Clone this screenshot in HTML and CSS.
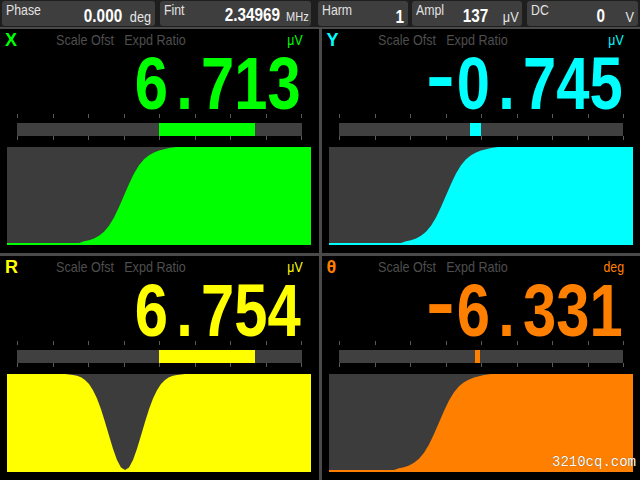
FILE: index.html
```html
<!DOCTYPE html>
<html>
<head>
    <title>Lock-in Amplifier</title>
    <link rel="stylesheet" href="styles.css">
</head>
<body>
<div class="screen">
    <div class="topbar">
        <div class="field field-phase">
            <span class="field-label">Phase</span>
            <span class="field-value">0.000<span class="unit unit-deg">deg</span></span>
        </div>
        <div class="field field-fint">
            <span class="field-label">Fint</span>
            <span class="field-value">2.34969<span class="unit unit-mhz">MHz</span></span>
        </div>
        <div class="field field-harm">
            <span class="field-label">Harm</span>
            <span class="field-value">1</span>
        </div>
        <div class="field field-ampl">
            <span class="field-label">Ampl</span>
            <span class="field-value">137<span class="unit unit-uv">μV</span></span>
        </div>
        <div class="field field-dc">
            <span class="field-label">DC</span>
            <span class="field-value">0<span class="unit unit-v">V</span></span>
        </div>
    </div>

    <div class="panels">
        <!-- X -->
        <div class="panel ch-x">
            <div class="panel-head">
                <span class="ch">X</span>
                <span class="menu">Scale Ofst<span class="menu-gap">Expd Ratio</span></span>
                <span class="ch-unit">μV</span>
            </div>
            <div class="reading">6<span class="dot">.</span>713</div>
            <div class="meter">
                <div class="ticks"></div>
                <div class="track"><div class="fill" style="left:49.8%;width:33.7%"></div></div>
                <div class="ticks"></div>
            </div>
            <svg class="chart" viewBox="0 0 304 98" preserveAspectRatio="none">
                <rect width="304" height="98" fill="#3c3c3c"/>
                <path transform="translate(117,0)" fill="currentColor" d="M-200,96 H-45 L-40,94.3 L-35,93.2 L-30,91.5 L-25,88.8 L-20,84.7 L-15,78.7 L-10,70.4 L-5,60.1 L0,48.5 L5,36.9 L10,26.6 L15,18.3 L20,12.3 L25,8.2 L30,5.5 L35,3.6 L40,2.2 L45,1 L52,0 H300 V98 H-200 Z"/>
            </svg>
        </div>

        <!-- Y -->
        <div class="panel ch-y">
            <div class="panel-head">
                <span class="ch">Y</span>
                <span class="menu">Scale Ofst<span class="menu-gap">Expd Ratio</span></span>
                <span class="ch-unit">μV</span>
            </div>
            <div class="reading"><span class="minus">-</span>0<span class="dot">.</span>745</div>
            <div class="meter">
                <div class="ticks"></div>
                <div class="track"><div class="fill" style="left:46.1%;width:3.9%"></div></div>
                <div class="ticks"></div>
            </div>
            <svg class="chart" viewBox="0 0 304 98" preserveAspectRatio="none">
                <rect width="304" height="98" fill="#3c3c3c"/>
                <path transform="translate(117,0)" fill="currentColor" d="M-200,96 H-45 L-40,94.3 L-35,93.2 L-30,91.5 L-25,88.8 L-20,84.7 L-15,78.7 L-10,70.4 L-5,60.1 L0,48.5 L5,36.9 L10,26.6 L15,18.3 L20,12.3 L25,8.2 L30,5.5 L35,3.6 L40,2.2 L45,1 L52,0 H300 V98 H-200 Z"/>
            </svg>
        </div>

        <!-- R -->
        <div class="panel ch-r">
            <div class="panel-head">
                <span class="ch">R</span>
                <span class="menu">Scale Ofst<span class="menu-gap">Expd Ratio</span></span>
                <span class="ch-unit">μV</span>
            </div>
            <div class="reading">6<span class="dot">.</span>754</div>
            <div class="meter">
                <div class="ticks"></div>
                <div class="track"><div class="fill" style="left:49.8%;width:33.7%"></div></div>
                <div class="ticks"></div>
            </div>
            <svg class="chart" viewBox="0 0 304 98" preserveAspectRatio="none">
                <rect width="304" height="98" fill="currentColor"/>
                <path transform="translate(118,0)" fill="#3c3c3c" d="M-60,0 L-52,0.9 L-48,1.8 L-44,3.3 L-40,6 L-36,10.1 L-32,16.2 L-28,24.6 L-24,35.3 L-20,47.9 L-16,61.6 L-12,74.8 L-8,85.9 L-4,93.4 L0,96 L4,93.4 L8,85.9 L12,74.8 L16,61.6 L20,47.9 L24,35.3 L28,24.6 L32,16.2 L36,10.1 L40,6 L44,3.3 L48,1.8 L52,0.9 L60,0 Z"/>
            </svg>
        </div>

        <!-- Theta -->
        <div class="panel ch-t">
            <div class="panel-head">
                <span class="ch">θ</span>
                <span class="menu">Scale Ofst<span class="menu-gap">Expd Ratio</span></span>
                <span class="ch-unit">deg</span>
            </div>
            <div class="reading"><span class="minus">-</span>6<span class="dot">.</span>331</div>
            <div class="meter">
                <div class="ticks"></div>
                <div class="track"><div class="fill" style="left:48.1%;width:1.6%"></div></div>
                <div class="ticks"></div>
            </div>
            <svg class="chart" viewBox="0 0 304 98" preserveAspectRatio="none">
                <rect width="304" height="98" fill="#3c3c3c"/>
                <path transform="translate(110,0)" fill="currentColor" d="M-200,96 H-45 L-40,94.3 L-35,93.2 L-30,91.5 L-25,88.8 L-20,84.7 L-15,78.7 L-10,70.4 L-5,60.1 L0,48.5 L5,36.9 L10,26.6 L15,18.3 L20,12.3 L25,8.2 L30,5.5 L35,3.6 L40,2.2 L45,1 L52,0 H300 V98 H-200 Z"/>
            </svg>
        </div>
    </div>

    <div class="watermark">3210cq.com</div>
</div>
</body>
</html>
```

FILE: styles.css
```css
body {
    margin: 0;
    background: #000;
    font-family: "Liberation Sans", Arial, sans-serif;
}
.screen {
    position: relative;
    width: 640px;
    height: 480px;
    display: flex;
    flex-direction: column;
    overflow: hidden;
}

/* top status fields */
.topbar {
    display: flex;
    gap: 5px;
    padding: 1px 2px;
    height: 27px;
    box-sizing: border-box;
    background: #1e1e1e;
}
.field {
    display: flex;
    background: #3e3e3e;
    border-radius: 3px;
    padding: 0 4px;
    height: 25px;
    white-space: nowrap;
}
.field-phase { width: 155px; }
.field-fint { width: 153px; }
.field-harm { width: 88px; margin-left: 2px; }
.field-ampl { width: 109px; margin-left: -1px; }
.field-dc { width: 110px; }
.field-label {
    flex: none;
    width: 0;
    display: inline-block;
    color: #e2e2e2;
    font-size: 15px;
    line-height: 15px;
    margin-top: 1px;
    transform: scaleX(0.82);
    transform-origin: left top;
}
.field-value {
    display: inline-block;
    margin-left: auto;
    align-self: flex-end;
    color: #fff;
    font-weight: bold;
    font-size: 18px;
    line-height: 18px;
    transform: scaleX(0.85);
    transform-origin: right bottom;
}
.unit {
    font-weight: normal;
    color: #e6e6e6;
    font-size: 15px;
}
.unit-deg { margin-left: 9px; }
.unit-mhz { margin-left: 7px; font-size: 13px; }
.unit-uv { margin-left: 17px; }
.unit-v { margin-left: 24px; }
.field-fint .field-value { margin-right: -2px; }
.field-ampl .field-value { margin-right: -1px; }

/* channel panels */
.panels {
    flex: 1;
    display: grid;
    grid-template-columns: 1fr 1fr;
    grid-template-rows: 1fr 1fr;
    gap: 3px;
    padding-top: 2px;
    background: #4a4a4a;
}
.panel {
    background: #000;
    display: flex;
    flex-direction: column;
    overflow: hidden;
}
.ch-x { color: #00ff00; }
.ch-y { color: #00ffff; }
.ch-r { color: #ffff00; }
.ch-t { color: #ff8000; }

.panel-head {
    display: flex;
    align-items: flex-start;
    height: 25px;
    box-sizing: border-box;
    padding: 3px 16px 0 5px;
    font-size: 15px;
    line-height: 16px;
    white-space: nowrap;
}
.ch {
    width: 51px;
    font-weight: bold;
    font-size: 18px;
}
.menu {
    display: inline-block;
    color: #4e4e4e;
    transform: scaleX(0.84);
    transform-origin: left top;
}
.menu-gap {
    margin-left: 12px;
}
.ch-unit {
    display: inline-block;
    margin-left: auto;
    transform: scaleX(0.82);
    transform-origin: right top;
}

.reading {
    font-weight: bold;
    font-size: 74px;
    line-height: 60px;
    height: 60px;
    text-align: right;
    white-space: nowrap;
    padding-right: 22px;
    transform: scaleX(0.807);
    transform-origin: right center;
}
.dot {
    display: inline-block;
    width: 41px;
    text-align: center;
}
.minus {
    display: inline-block;
    width: 41px;
    text-align: center;
    transform: translateY(-8px) scaleX(1.45);
}

.meter {
    margin: 0 17px;
}
.ticks {
    height: 4px;
    background: repeating-linear-gradient(to right, #5a5a5a 0 1px, transparent 1px 35.56px);
    width: 286px;
}
.track {
    position: relative;
    height: 13px;
    margin: 5px 0 0;
    background: #404040;
}
.fill {
    position: absolute;
    top: 0;
    bottom: 0;
    background: currentColor;
}
.chart {
    display: block;
    width: 304px;
    height: 98px;
    margin: 7px 7px 0;
}

.watermark {
    position: absolute;
    right: 4px;
    bottom: 10px;
    color: #fff;
    font-family: "Liberation Mono", monospace;
    font-size: 14px;
    text-shadow: 0 0 1px #6a3a00;
}
```
